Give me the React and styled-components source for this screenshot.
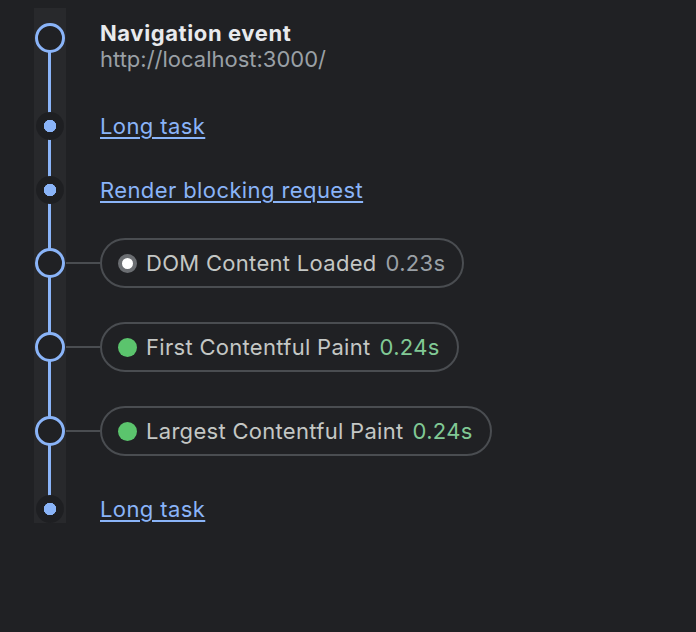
import React from 'react';
import styled, { createGlobalStyle, css } from 'styled-components';

const Global = createGlobalStyle`
  html, body { margin: 0; padding: 0; background: #202124; }
  body { font-family: Inter, "Liberation Sans", sans-serif; -webkit-font-smoothing: antialiased; }
`;

const Page = styled.div`
  width: 696px;
  min-height: 632px;
  box-sizing: border-box;
  padding: 8px 0 0 34px;
  background: #202124;
`;

const Timeline = styled.ol`
  list-style: none;
  margin: 0;
  padding: 13px 0 0;
  width: 500px;
  display: flex;
  flex-direction: column;
  background:
    linear-gradient(#8ab4f8, #8ab4f8) 14px 30px / 3px calc(100% - 44px) no-repeat,
    linear-gradient(#28292c, #28292c) 0 0 / 32px 100% no-repeat;
`;

const Item = styled.li`
  display: flex;
  align-items: ${(p) => (p.$top ? 'flex-start' : 'center')};
  margin-top: ${(p) => p.$gap}px;
`;

const Rail = styled.div`
  width: 32px;
  flex: none;
  display: flex;
  justify-content: center;
  margin-top: ${(p) => p.$offset || 0}px;
`;

const Ring = styled.span`
  width: 30px;
  height: 30px;
  box-sizing: border-box;
  border-radius: 50%;
  border: 3px solid #8ab4f8;
  background: #202124;
`;

const Dot = styled.span`
  width: 28px;
  height: 28px;
  border-radius: 50%;
  background: radial-gradient(circle, #8ab4f8 0 6px, #1e1f22 6.5px);
`;

const Connector = styled.span`
  width: 34px;
  height: 2px;
  flex: none;
  background: #4a4d51;
`;

const Body = styled.div`
  margin-left: ${(p) => (p.$flush ? 0 : 34)}px;
  display: flex;
  flex-direction: column;
  font-size: 22px;
  line-height: 26px;
  letter-spacing: 0.4px;
`;

const Title = styled.div`
  font-weight: 700;
  color: #e8eaed;
  letter-spacing: 0.6px;
  margin-top: -1px;
`;

const Url = styled.div`
  color: #9aa0a6;
  letter-spacing: 0;
`;

const Link = styled.a`
  color: #8ab4f8;
  text-decoration: underline;
  text-underline-offset: 3px;
  text-decoration-thickness: 1.5px;
  cursor: pointer;
`;

const Pill = styled.div`
  display: inline-flex;
  align-items: center;
  height: 50px;
  box-sizing: border-box;
  border: 2px solid #4a4d51;
  border-radius: 25px;
  padding: 0 17px 0 16px;
  color: #c4c7c5;
  letter-spacing: 0.3px;
  white-space: nowrap;
`;

const StatusDot = styled.span`
  width: 19px;
  height: 19px;
  box-sizing: border-box;
  border-radius: 50%;
  margin-right: 9px;
  flex: none;
  ${(p) =>
    p.$kind === 'neutral'
      ? css`
          background: #fff;
          border: 4px solid #6b6e72;
        `
      : css`
          background: #5bc46d;
        `}
`;

const Value = styled.span`
  margin-left: 9px;
  color: ${(p) => (p.$good ? '#81c995' : '#9aa0a6')};
`;

const metrics = [
  { label: 'DOM Content Loaded', value: '0.23s', kind: 'neutral' },
  { label: 'First Contentful Paint', value: '0.24s', kind: 'good' },
  { label: 'Largest Contentful Paint', value: '0.24s', kind: 'good' },
];

export default function App() {
  return (
    <>
      <Global />
      <Page>
        <Timeline>
          <Item $top $gap={0}>
            <Rail $offset={2}>
              <Ring />
            </Rail>
            <Body>
              <Title>Navigation event</Title>
              <Url>http://localhost:3000/</Url>
            </Body>
          </Item>
          <Item $gap={40}>
            <Rail>
              <Dot />
            </Rail>
            <Body>
              <Link>Long task</Link>
            </Body>
          </Item>
          <Item $gap={36}>
            <Rail>
              <Dot />
            </Rail>
            <Body>
              <Link>Render blocking request</Link>
            </Body>
          </Item>
          {metrics.map((m) => (
            <Item key={m.label} $gap={34}>
              <Rail>
                <Ring />
              </Rail>
              <Connector />
              <Body $flush>
                <Pill>
                  <StatusDot $kind={m.kind} />
                  {m.label}
                  <Value $good={m.kind === 'good'}>{m.value}</Value>
                </Pill>
              </Body>
            </Item>
          ))}
          <Item $gap={39}>
            <Rail>
              <Dot />
            </Rail>
            <Body>
              <Link>Long task</Link>
            </Body>
          </Item>
        </Timeline>
      </Page>
    </>
  );
}
